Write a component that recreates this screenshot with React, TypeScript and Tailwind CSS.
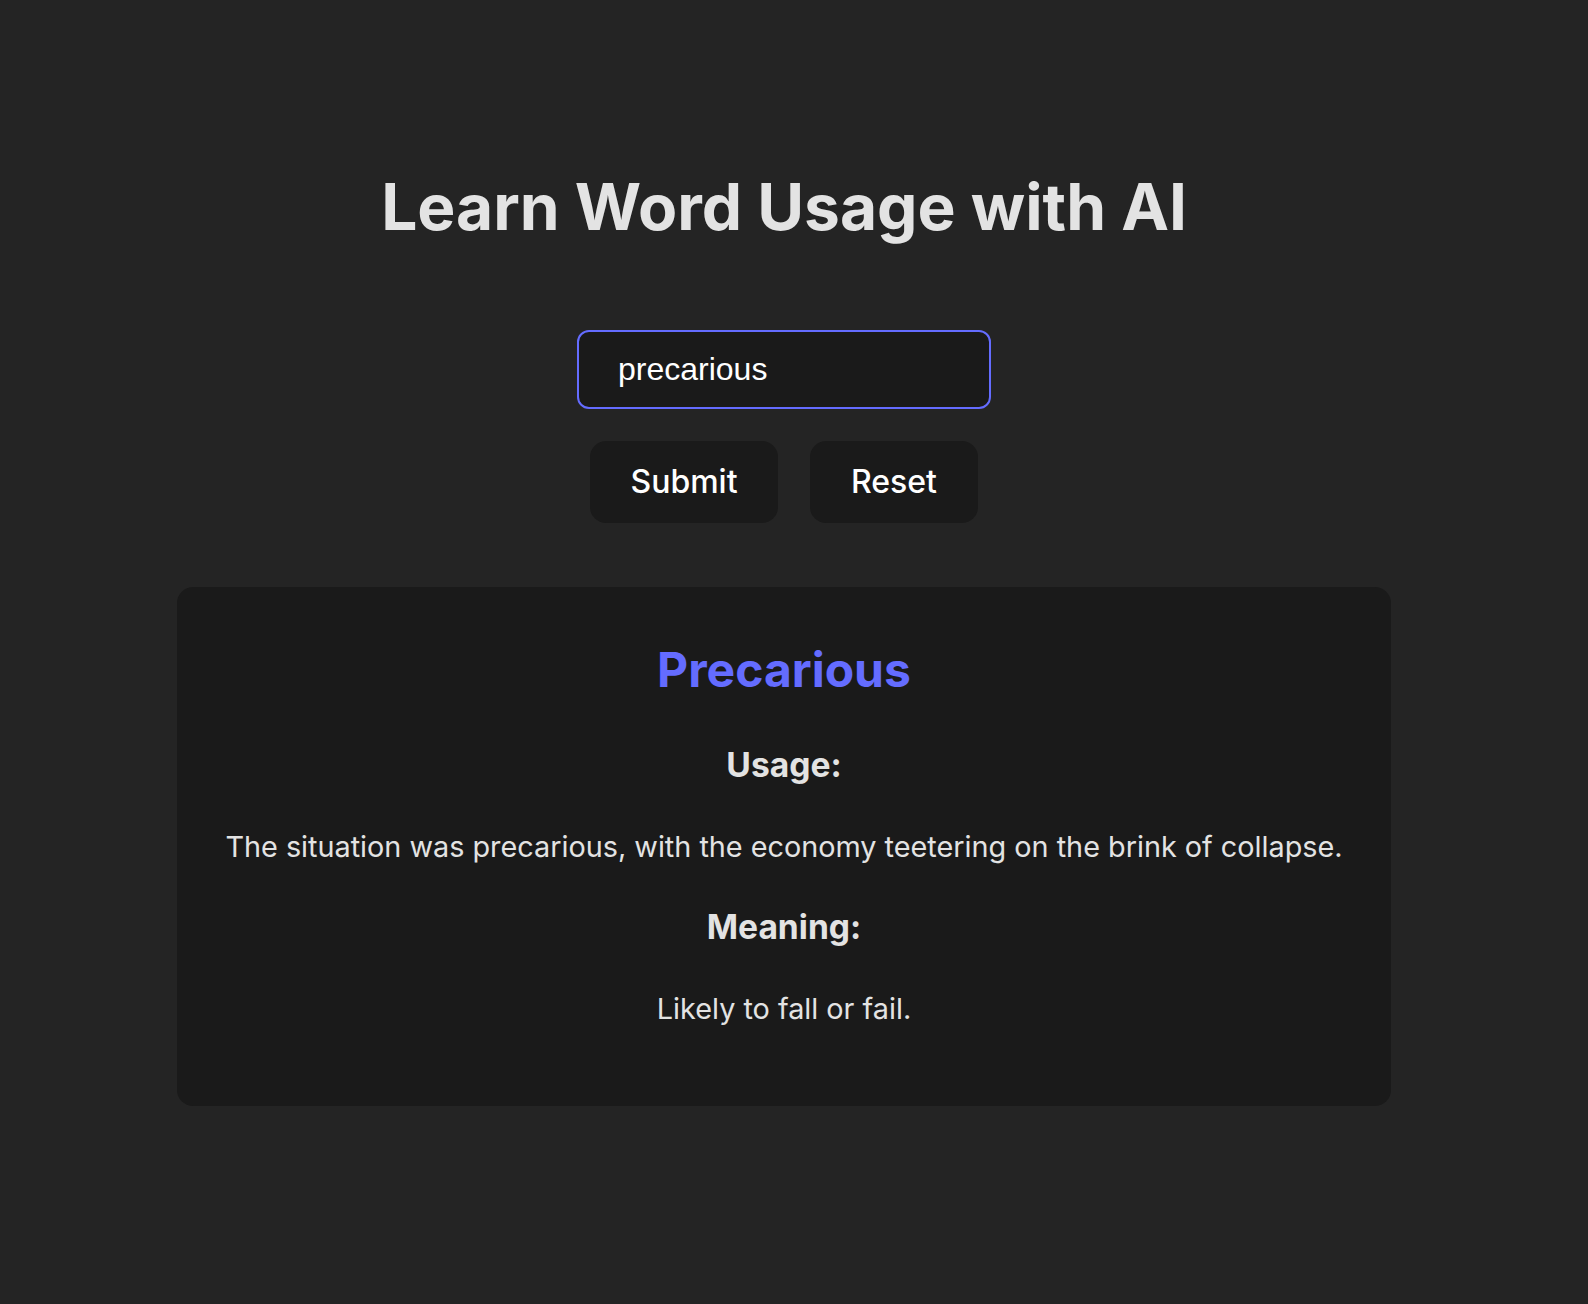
import { useState } from 'react';

const inter = "font-['Inter',system-ui,sans-serif]";

export default function App() {
  const [word, setWord] = useState('precarious');

  return (
    <div className={`min-h-[1304px] bg-[#242424] pr-[20px] text-[#e3e3e3] ${inter}`}>
      <main className="flex flex-col items-center pt-[175px]">
        <h1 className="text-[64px] font-bold leading-none">Learn Word Usage with AI</h1>

        <input
          value={word}
          onChange={(e) => setWord(e.target.value)}
          className="mt-[91px] h-[79px] w-[414px] rounded-[12px] border-2 border-[#646cff] bg-[#1a1a1a] pl-[39px] font-['Liberation_Sans',Arial,sans-serif] text-[32px] text-white outline-none"
        />

        <div className="mt-[32px] flex gap-8">
          <Button label="Submit" width="w-[188px]" />
          <Button label="Reset" width="w-[168px]" />
        </div>

        <section className="mt-[64px] flex h-[519px] w-[1214px] flex-col items-center rounded-2xl bg-[#1a1a1a] pt-[59px] text-center">
          <h2 className="text-[48px] font-bold leading-none text-[#646cff]">Precarious</h2>
          <h3 className="mt-[54px] text-[33.6px] font-bold leading-none">Usage:</h3>
          <p className="mt-[51px] text-[28.8px] leading-none">
            The situation was precarious, with the economy teetering on the brink of collapse.
          </p>
          <h3 className="mt-[49px] text-[33.6px] font-bold leading-none">Meaning:</h3>
          <p className="mt-[51px] text-[28.8px] leading-none">Likely to fall or fail.</p>
        </section>
      </main>
    </div>
  );
}

function Button({ label, width }: { label: string; width: string }) {
  return (
    <button className={`h-[82px] ${width} rounded-2xl border border-transparent bg-[#1a1a1a] text-[32px] font-medium text-white`}>
      {label}
    </button>
  );
}
